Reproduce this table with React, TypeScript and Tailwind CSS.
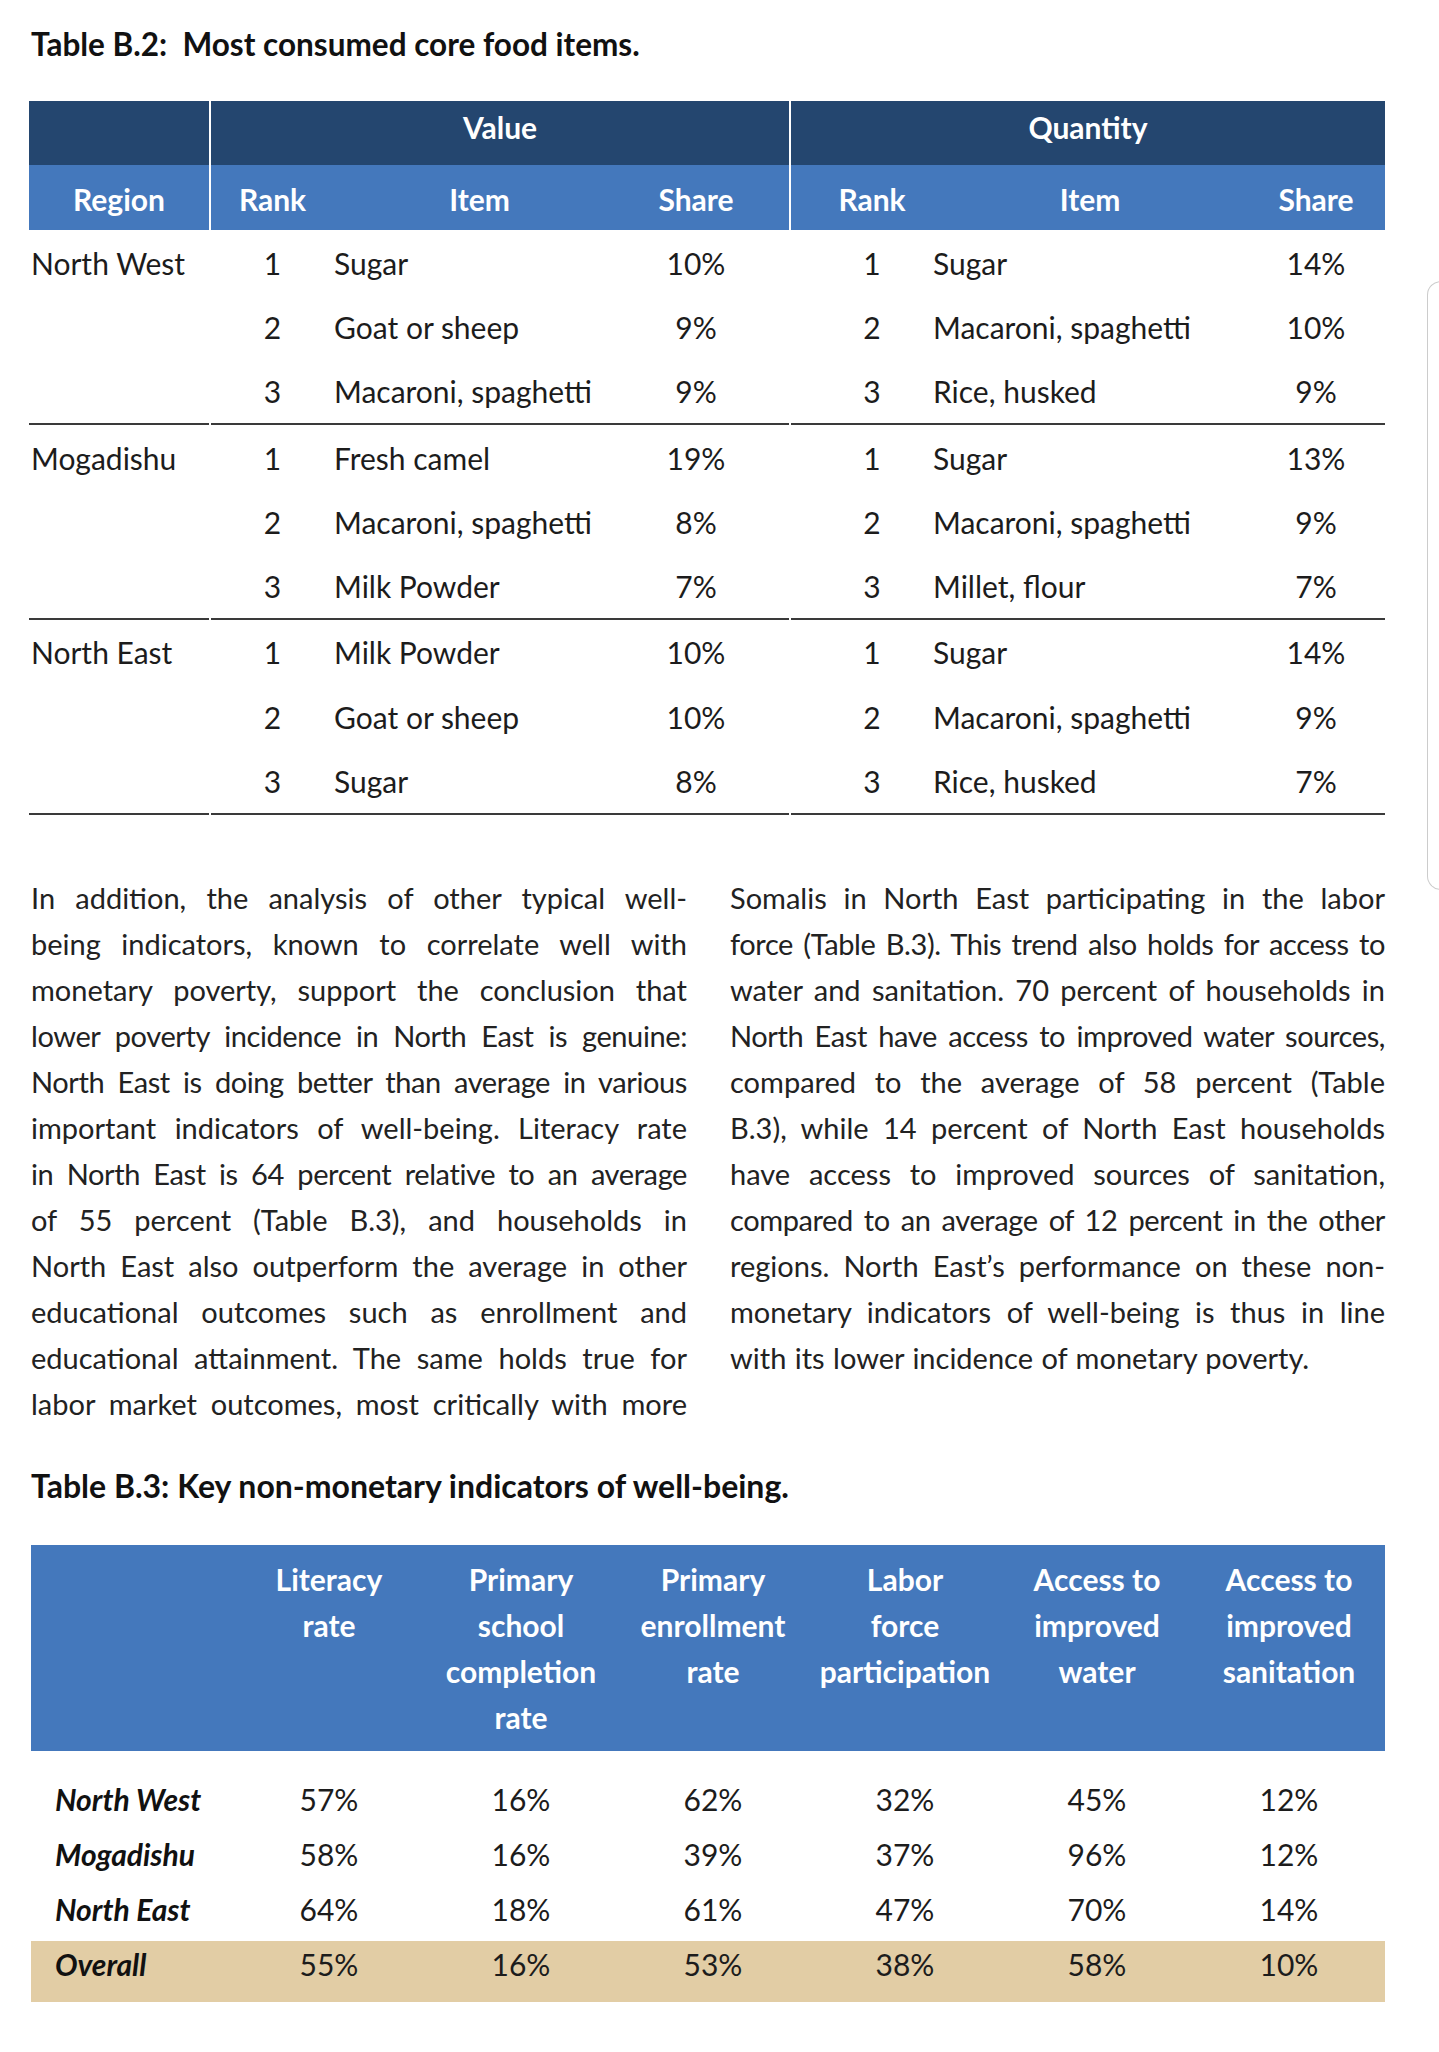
const valueRows = [
  {
    region: "North West",
    value: [
      ["1", "Sugar", "10%"],
      ["2", "Goat or sheep", "9%"],
      ["3", "Macaroni, spaghetti", "9%"],
    ],
    quantity: [
      ["1", "Sugar", "14%"],
      ["2", "Macaroni, spaghetti", "10%"],
      ["3", "Rice, husked", "9%"],
    ],
  },
  {
    region: "Mogadishu",
    value: [
      ["1", "Fresh camel", "19%"],
      ["2", "Macaroni, spaghetti", "8%"],
      ["3", "Milk Powder", "7%"],
    ],
    quantity: [
      ["1", "Sugar", "13%"],
      ["2", "Macaroni, spaghetti", "9%"],
      ["3", "Millet, flour", "7%"],
    ],
  },
  {
    region: "North East",
    value: [
      ["1", "Milk Powder", "10%"],
      ["2", "Goat or sheep", "10%"],
      ["3", "Sugar", "8%"],
    ],
    quantity: [
      ["1", "Sugar", "14%"],
      ["2", "Macaroni, spaghetti", "9%"],
      ["3", "Rice, husked", "7%"],
    ],
  },
];

const leftLines = [
  "In addition, the analysis of other typical well-",
  "being indicators, known to correlate well with",
  "monetary poverty, support the conclusion that",
  "lower poverty incidence in North East is genuine:",
  "North East is doing better than average in various",
  "important indicators of well-being. Literacy rate",
  "in North East is 64 percent relative to an average",
  "of 55 percent (Table B.3), and households in",
  "North East also outperform the average in other",
  "educational outcomes such as enrollment and",
  "educational attainment. The same holds true for",
  "labor market outcomes, most critically with more",
];

const rightLines = [
  "Somalis in North East participating in the labor",
  "force (Table B.3). This trend also holds for access to",
  "water and sanitation. 70 percent of households in",
  "North East have access to improved water sources,",
  "compared to the average of 58 percent (Table",
  "B.3), while 14 percent of North East households",
  "have access to improved sources of sanitation,",
  "compared to an average of 12 percent in the other",
  "regions. North East\u2019s performance on these non-",
  "monetary indicators of well-being is thus in line",
  "with its lower incidence of monetary poverty.",
];

// lines that are set tight in the source
const tight = new Set([
  "force (Table B.3). This trend also holds for access to",
  "North East have access to improved water sources,",
  "compared to an average of 12 percent in the other",
  "lower poverty incidence in North East is genuine:",
  "North East is doing better than average in various",
  "in North East is 64 percent relative to an average",
]);

const indicatorHeads = [
  ["Literacy", "rate"],
  ["Primary", "school", "completion", "rate"],
  ["Primary", "enrollment", "rate"],
  ["Labor", "force", "participation"],
  ["Access to", "improved", "water"],
  ["Access to", "improved", "sanitation"],
];

const indicatorRows = [
  ["North West", "57%", "16%", "62%", "32%", "45%", "12%"],
  ["Mogadishu", "58%", "16%", "39%", "37%", "96%", "12%"],
  ["North East", "64%", "18%", "61%", "47%", "70%", "14%"],
];
const overall = ["Overall", "55%", "16%", "53%", "38%", "58%", "10%"];

function Justified({ lines, lastJustified }: { lines: string[]; lastJustified: boolean }) {
  return (
    <div>
      {lines.map((l, i) => {
        const last = i === lines.length - 1 && !lastJustified;
        return (
          <div
            key={i}
            className={
              (last
                ? "whitespace-nowrap text-left [word-spacing:1px]"
                : "whitespace-nowrap text-justify [text-align-last:justify] [word-spacing:-2px]") +
              (tight.has(l) ? " tracking-[-0.4px]" : "")
            }
          >
            {l}
          </div>
        );
      })}
    </div>
  );
}

function GroupRows() {
  return (
    <>
      {valueRows.map((g) => (
        <div key={g.region} className="flex gap-[2px]">
          <div className="w-[180px] border-b-2 border-[#3a3a3a]">
            <div className="h-[64.3px] flex items-center pl-[2px] pt-[2px]">{g.region}</div>
          </div>
          <div className="w-[578px] border-b-2 border-[#3a3a3a]">
            {g.value.map((r) => (
              <div key={r[0]} className="h-[64.3px] grid grid-cols-[123px_269px_186px] items-center pt-[2px]">
                <div className="text-center">{r[0]}</div>
                <div>{r[1]}</div>
                <div className="text-center">{r[2]}</div>
              </div>
            ))}
          </div>
          <div className="flex-1 border-b-2 border-[#3a3a3a]">
            {g.quantity.map((r) => (
              <div key={r[0]} className="h-[64.3px] grid grid-cols-[142px_314px_138px] items-center pt-[2px]">
                <div className="text-center pl-[20px]">{r[0]}</div>
                <div>{r[1]}</div>
                <div className="text-center">{r[2]}</div>
              </div>
            ))}
          </div>
        </div>
      ))}
    </>
  );
}

export default function App() {
  return (
    <div className="relative w-[1439px] min-h-[2052px] bg-white text-[#1c1c1c] font-['Lato','Liberation_Sans',sans-serif] text-[30px]">
      <div className="px-[29px] pt-[25px] pb-[50px] w-[1414px]">
        {/* Table B.2 */}
        <h2 className="ml-[2px] text-[31.5px] leading-[38px] font-bold text-[#111]">
          Table B.2:&nbsp; Most consumed core food items.
        </h2>

        <div className="mt-[38px]">
          {/* group header */}
          <div className="flex gap-[2px] h-[64px] text-white font-bold">
            <div className="w-[180px] bg-[#24466f]" />
            <div className="w-[578px] bg-[#24466f] flex items-center justify-center pb-[12px]">Value</div>
            <div className="flex-1 bg-[#24466f] flex items-center justify-center pb-[12px]">Quantity</div>
          </div>
          {/* column header */}
          <div className="flex gap-[2px] h-[65px] text-white font-bold">
            <div className="w-[180px] bg-[#4478bc] flex items-center justify-center pt-[4px]">Region</div>
            <div className="w-[578px] bg-[#4478bc] grid grid-cols-[123px_269px_186px] items-center pt-[4px]">
              <div className="text-center">Rank</div>
              <div className="text-center pl-[22px]">Item</div>
              <div className="text-center">Share</div>
            </div>
            <div className="flex-1 bg-[#4478bc] grid grid-cols-[142px_314px_138px] items-center pt-[4px]">
              <div className="text-center pl-[20px]">Rank</div>
              <div className="text-center">Item</div>
              <div className="text-center">Share</div>
            </div>
          </div>

          <GroupRows />
        </div>

        {/* Body text */}
        <div className="mt-[60px] flex leading-[46px] text-[29px] text-[#222]">
          <div className="ml-[2px] w-[656px]">
            <Justified lines={leftLines} lastJustified={true} />
          </div>
          <div className="ml-[43px] w-[655px]">
            <Justified lines={rightLines} lastJustified={false} />
          </div>
        </div>

        {/* Table B.3 */}
        <h2 className="mt-[40px] ml-[2px] text-[32px] leading-[38px] font-bold text-[#111]">
          Table B.3: Key non-monetary indicators of well-being.
        </h2>

        <div className="mt-[40px] ml-[2px]">
          <div className="grid grid-cols-[202px_repeat(6,1fr)] bg-[#4478bc] text-white font-bold leading-[46px] pt-[11px] pb-[11px] min-h-[205px]">
            <div />
            {indicatorHeads.map((h, i) => (
              <div key={i} className="text-center">
                {h.map((w) => (
                  <div key={w}>{w}</div>
                ))}
              </div>
            ))}
          </div>

          <div className="mt-[21px]">
            {indicatorRows.map((r) => (
              <div key={r[0]} className="grid grid-cols-[202px_repeat(6,1fr)] h-[55px] items-center">
                <div className="pl-[24px] font-bold italic text-[#111]">{r[0]}</div>
                {r.slice(1).map((v, i) => (
                  <div key={i} className="text-center">{v}</div>
                ))}
              </div>
            ))}
            <div className="mt-[4px] grid grid-cols-[202px_repeat(6,1fr)] h-[61px] leading-[46px] bg-[#e2cda5]">
              <div className="pl-[24px] font-bold italic text-[#111]">{overall[0]}</div>
              {overall.slice(1).map((v, i) => (
                <div key={i} className="text-center">{v}</div>
              ))}
            </div>
          </div>
        </div>
      </div>

      {/* floating panel edge at the right */}
      <div className="absolute left-[1427px] top-[281px] w-[40px] h-[609px] rounded-l-[14px] border border-r-0 border-[#cccccc] bg-white" />
    </div>
  );
}
